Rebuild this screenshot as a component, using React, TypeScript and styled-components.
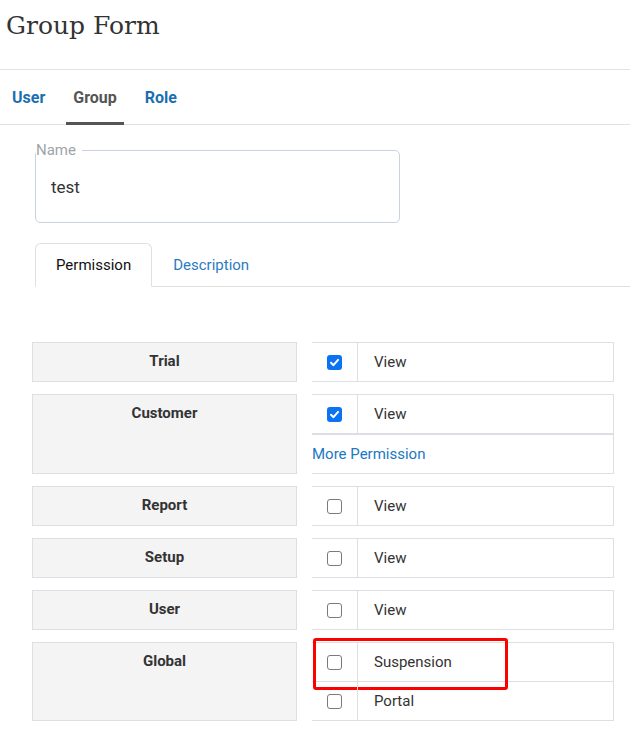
import styled, {createGlobalStyle} from 'styled-components'

const GlobalStyle = createGlobalStyle`
  body {
    margin: 0;
    background: #fff;
    font-family: Roboto, "Liberation Sans", sans-serif;
    color: #333;
  }
`

type Perm = {label: string, checked?: boolean}
type Group = {name: string, perms: Perm[], more?: boolean}

const groups: Group[] = [
    {name: 'Trial', perms: [{label: 'View', checked: true}]},
    {name: 'Customer', perms: [{label: 'View', checked: true}], more: true},
    {name: 'Report', perms: [{label: 'View'}]},
    {name: 'Setup', perms: [{label: 'View'}]},
    {name: 'User', perms: [{label: 'View'}]},
    {name: 'Global', perms: [{label: 'Suspension'}, {label: 'Portal'}]},
]

function CheckBox({checked}: {checked?: boolean}) {
    return (
        <Box checked={checked}>
            {checked && (
                <svg width="11" height="11" viewBox="0 0 12 12">
                    <path d="M2.2 6.3 L4.9 8.9 L9.9 3.2" fill="none" stroke="#fff" strokeWidth="2.2"
                          strokeLinecap="round" strokeLinejoin="round"/>
                </svg>
            )}
        </Box>
    )
}

function App() {
    return (
        <>
            <GlobalStyle/>
            <Page>
                <Header>
                    <Title>Group Form</Title>
                </Header>
                <Nav>
                    <NavItem>User</NavItem>
                    <NavItem active>Group</NavItem>
                    <NavItem>Role</NavItem>
                </Nav>
                <Form>
                    <Fieldset>
                        <Legend>Name</Legend>
                        <InputText>test</InputText>
                    </Fieldset>
                    <SubTabs>
                        <SubTab active>Permission</SubTab>
                        <SubTab>Description</SubTab>
                    </SubTabs>
                </Form>
                <Table>
                    {groups.map((g) => (
                        <Row key={g.name}>
                            <GroupCell>{g.name}</GroupCell>
                            <PermCell>
                                {g.perms.map((p, i) => (
                                    <PermRow key={p.label} first={i === 0}>
                                        <CheckCell>
                                            <CheckBox checked={p.checked}/>
                                        </CheckCell>
                                        <PermLabel>{p.label}</PermLabel>
                                        {g.name === 'Global' && i === 0 && <Highlight/>}
                                    </PermRow>
                                ))}
                                {g.more && <MoreRow>More Permission</MoreRow>}
                            </PermCell>
                        </Row>
                    ))}
                </Table>
            </Page>
        </>
    )
}

const Page = styled.div`
  width: 630px;
`

const Header = styled.header`
  height: 70px;
  border-bottom: 1px solid #e2e2e2;
  box-sizing: border-box;
`

const Title = styled.h1`
  margin: 0;
  padding: 10px 0 0 6px;
  font-family: "DejaVu Serif", "Liberation Serif", serif;
  font-weight: 400;
  font-size: 25px;
  line-height: 32px;
  color: #333;
`

const Nav = styled.nav`
  display: flex;
  gap: 14px;
  padding-left: 5px;
  height: 55px;
  border-bottom: 1px solid #e2e2e2;
  box-sizing: border-box;
`

const NavItem = styled.div<{active?: boolean}>`
  display: flex;
  align-items: center;
  padding: 2px 7px 0;
  font-size: 16px;
  font-weight: 700;
  color: ${(p) => (p.active ? '#555' : '#1b6fb0')};
  border-bottom: 3px solid ${(p) => (p.active ? '#555' : 'transparent')};
  margin-bottom: -1px;
`

const Form = styled.div`
  padding: 17px 0 0 35px;
`

const Fieldset = styled.fieldset`
  margin: 0;
  width: 365px;
  box-sizing: border-box;
  padding: 0;
  border: 1px solid #c9d3df;
  border-radius: 5px;
  height: 81px;
`

const Legend = styled.legend`
  margin-left: 0;
  padding: 0 6px 0 0;
  font-size: 15px;
  line-height: 16px;
  color: #a0a4aa;
`

const InputText = styled.div`
  padding: 19px 0 0 15px;
  font-size: 17px;
  line-height: 20px;
  color: #333;
`

const SubTabs = styled.div`
  display: flex;
  margin-top: 20px;
  border-bottom: 1px solid #e0e0e0;
`

const SubTab = styled.div<{active?: boolean}>`
  height: 42px;
  display: flex;
  align-items: center;
  padding: 0 20px;
  font-size: 15px;
  color: ${(p) => (p.active ? '#111' : '#2b7bbf')};
  border: 1px solid ${(p) => (p.active ? '#e0e0e0' : 'transparent')};
  border-bottom-color: ${(p) => (p.active ? '#fff' : 'transparent')};
  border-radius: 6px 6px 0 0;
  margin-bottom: -1px;
`

const Table = styled.div`
  display: flex;
  flex-direction: column;
  gap: 12px;
  padding: 55px 0 0 32px;
`

const Row = styled.div`
  display: flex;
  gap: 15px;
`

const GroupCell = styled.div`
  width: 265px;
  box-sizing: border-box;
  background: #f4f4f5;
  border: 1px solid #dcdfe3;
  text-align: center;
  padding-top: 8px;
  font-size: 15px;
  line-height: 20px;
  font-weight: 700;
  color: #333;
`

const PermCell = styled.div`
  width: 301px;
  display: flex;
  flex-direction: column;
  border-right: 1px solid #dcdfe3;
`

const PermRow = styled.div<{first?: boolean}>`
  position: relative;
  display: flex;
  height: 38px;
  border-top: ${(p) => (p.first ? '1px solid #dcdfe3' : 'none')};
  border-bottom: 1px solid #dcdfe3;
`

const CheckCell = styled.div`
  width: 45px;
  border-right: 1px solid #dcdfe3;
  display: flex;
  align-items: center;
  justify-content: center;
`

const Box = styled.span<{checked?: boolean}>`
  width: 15px;
  height: 15px;
  box-sizing: border-box;
  border-radius: 3px;
  display: flex;
  align-items: center;
  justify-content: center;
  background: ${(p) => (p.checked ? '#0b73f2' : '#fff')};
  border: ${(p) => (p.checked ? 'none' : '1.5px solid #7a7a7a')};
`

const PermLabel = styled.div`
  display: flex;
  align-items: center;
  padding-left: 16px;
  font-size: 15px;
  color: #333;
`

const MoreRow = styled.div`
  height: 38px;
  display: flex;
  align-items: center;
  font-size: 15px;
  color: #1b78c2;
  border-top: 1px solid #dcdfe3;
  border-bottom: 1px solid #dcdfe3;
`

const Highlight = styled.div`
  position: absolute;
  left: 1px;
  top: -5px;
  width: 195px;
  height: 52px;
  box-sizing: border-box;
  border: 3px solid #f00;
  border-radius: 3px;
  pointer-events: none;
`

export default App
